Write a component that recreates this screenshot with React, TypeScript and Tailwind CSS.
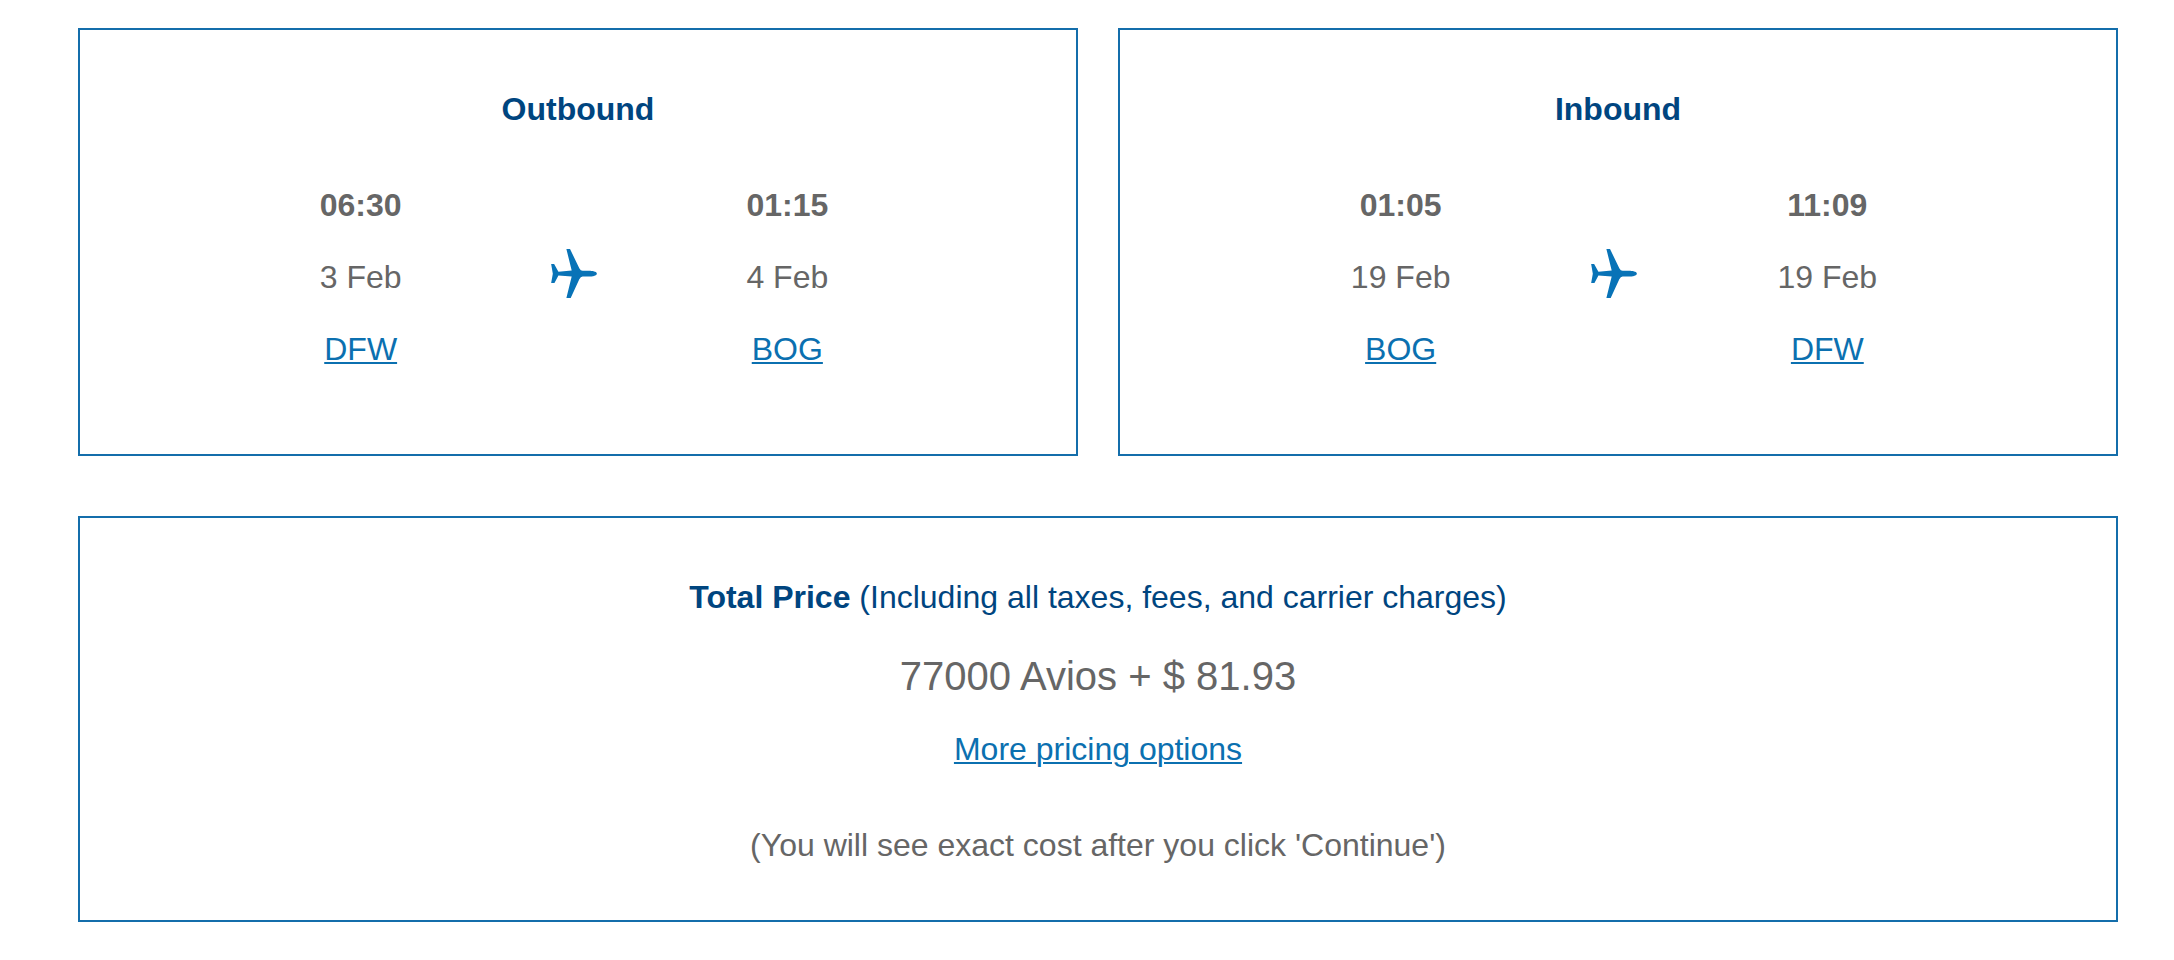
import { clsx } from "clsx";

type Stop = { time: string; date: string; airport: string };
type Leg = { title: string; from: Stop; to: Stop };

const legs: Leg[] = [
  {
    title: "Outbound",
    from: { time: "06:30", date: "3 Feb", airport: "DFW" },
    to: { time: "01:15", date: "4 Feb", airport: "BOG" },
  },
  {
    title: "Inbound",
    from: { time: "01:05", date: "19 Feb", airport: "BOG" },
    to: { time: "11:09", date: "19 Feb", airport: "DFW" },
  },
];

const panel = "border-2 border-[#146eab] bg-white pt-[55px] text-center";
const link = "text-[#0b70b0] underline decoration-2 underline-offset-2";

function PlaneIcon({ className }: { className?: string }) {
  return (
    <svg viewBox="0 0 138 148" fill="currentColor" aria-hidden="true" className={className}>
      <path d="M46 0H57L85 58Q89 66 95 66H118C130 67 138 70 138 74.500C138 79 130 82 118 83H95Q89 83 85 91L59 148H46L62 83L22 80L10 103H0L5 75L0 45H9L22 69L62 65Z" />
    </svg>
  );
}

function StopDetails({ time, date, airport }: Stop) {
  return (
    <div className="flex flex-col items-center gap-6">
      <strong className="font-bold">{time}</strong>
      <span>{date}</span>
      <a href="#" className={link}>
        {airport}
      </a>
    </div>
  );
}

function LegCard({ title, from, to }: Leg) {
  return (
    <section className={clsx(panel, "pb-[81px]")}>
      <h2 className="mb-12 font-bold text-[#00457f]">{title}</h2>
      <div className="grid grid-cols-3 items-center pl-[174px] pr-[182px]">
        <StopDetails {...from} />
        <PlaneIcon className="mb-2 h-[49px] w-[46px] justify-self-center text-[#0873b7]" />
        <StopDetails {...to} />
      </div>
    </section>
  );
}

export default function App() {
  return (
    <main className="bg-white pb-[38px] pl-[78px] pr-14 pt-7 font-['Liberation_Sans',Arial,sans-serif] text-[32px] leading-[48px] text-[#666]">
      <div className="grid grid-cols-2 gap-10">
        {legs.map((leg) => (
          <LegCard key={leg.title} {...leg} />
        ))}
      </div>

      {/* Total price */}
      <section className={clsx(panel, "mt-[60px] pb-[51px]")}>
        <h2 className="text-[#00457f]">
          <strong className="font-bold">Total Price</strong> (Including all taxes, fees, and carrier charges)
        </h2>
        <p className="mt-[31px] text-[40px]">77000 Avios + $ 81.93</p>
        <p className="mt-[25px]">
          <a href="#" className={link}>
            More pricing options
          </a>
        </p>
        <p className="mt-12">(You will see exact cost after you click 'Continue')</p>
      </section>
    </main>
  );
}
